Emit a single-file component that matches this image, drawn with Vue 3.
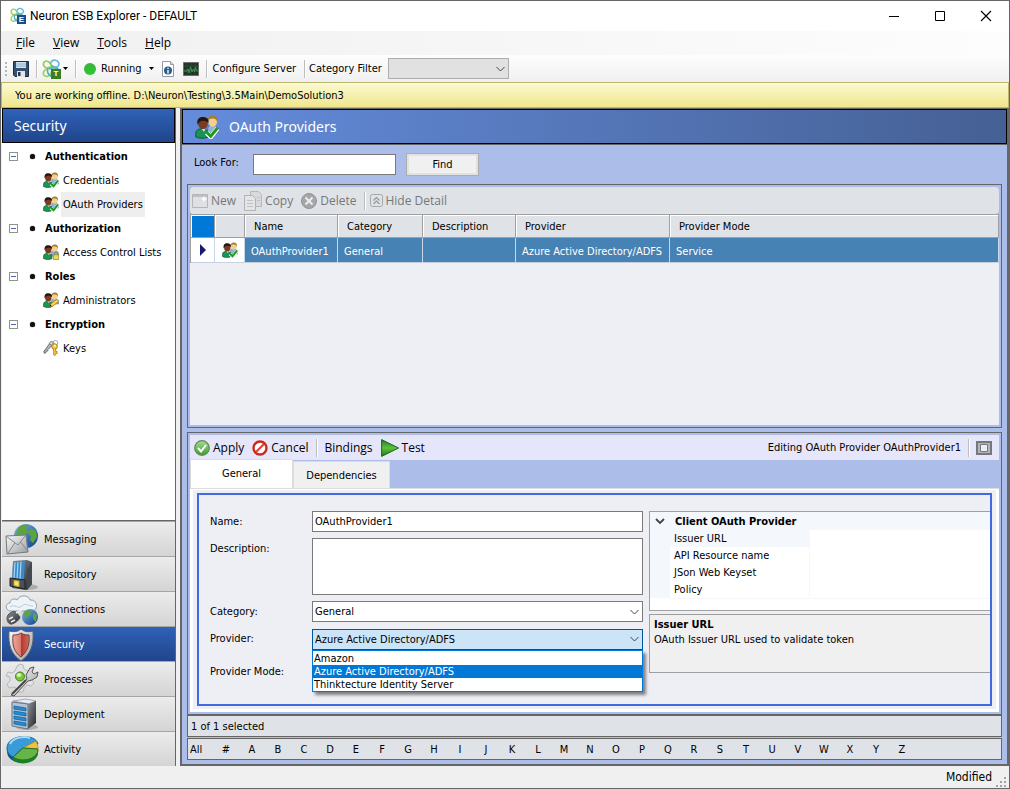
<script setup>
import { ref } from 'vue'

const menus = ['File', 'View', 'Tools', 'Help']

const tree = [
  { name: 'Authentication', children: [{ name: 'Credentials', badge: 'check' }, { name: 'OAuth Providers', badge: 'check', active: true }] },
  { name: 'Authorization', children: [{ name: 'Access Control Lists', badge: 'lock' }] },
  { name: 'Roles', children: [{ name: 'Administrators', badge: 'pencil' }] },
  { name: 'Encryption', children: [{ name: 'Keys', badge: 'keys' }] },
]

const sections = ['Messaging', 'Repository', 'Connections', 'Security', 'Processes', 'Deployment', 'Activity']
const columns = ['Name', 'Category', 'Description', 'Provider', 'Provider Mode']
const row = ['OAuthProvider1', 'General', '', 'Azure Active Directory/ADFS', 'Service']
const providers = ['Amazon', 'Azure Active Directory/ADFS', 'Thinktecture Identity Server']
const properties = ['Issuer URL', 'API Resource name', 'JSon Web Keyset', 'Policy']
const letters = ['#', ...'ABCDEFGHIJKLMNOPQRSTUVWXYZ']

const search = ref('')
const name = ref('OAuthProvider1')
const description = ref('')
const category = ref('General')
const provider = ref('Azure Active Directory/ADFS')
</script>

<template>
  <div class="window">
    <svg class="defs" width="0" height="0" aria-hidden="true">
      <defs>
        <linearGradient id="g-globe" x1="0" y1="0" x2="1" y2="1"><stop offset="0" stop-color="#7db8e8" /><stop offset="1" stop-color="#0b3f8f" /></linearGradient>
        <linearGradient id="g-silver" x1="0" y1="0" x2="1" y2="1"><stop offset="0" stop-color="#fafafa" /><stop offset="1" stop-color="#9a9da0" /></linearGradient>
        <linearGradient id="g-dark" x1="0" y1="0" x2="1" y2="1"><stop offset="0" stop-color="#8a9096" /><stop offset="1" stop-color="#23272b" /></linearGradient>
        <linearGradient id="g-play" x1="0" y1="0" x2="0" y2="1"><stop offset="0" stop-color="#1f7d1d" /><stop offset=".5" stop-color="#5fbf3e" /><stop offset="1" stop-color="#1c7a18" /></linearGradient>
        <linearGradient id="g-shield" x1="0" y1="0" x2="1" y2="0"><stop offset="0" stop-color="#f0a79c" /><stop offset=".5" stop-color="#d9776c" /><stop offset=".51" stop-color="#b3382f" /><stop offset="1" stop-color="#d4695c" /></linearGradient>
        <linearGradient id="g-check" x1="0" y1="0" x2="0" y2="1"><stop offset="0" stop-color="#a9d99a" /><stop offset="1" stop-color="#3d9c2c" /></linearGradient>
        <symbol id="people" viewBox="0 0 16 16">
          <path d="M8.500 12V9c0-1.500 1-2.200 2.500-2.200 2.600 0 4.500 1 4.500 3V12z" fill="#8fb4d6" stroke="#4a6c92" stroke-width=".5" />
          <ellipse cx="11.800" cy="4.300" rx="2.900" ry="3.500" fill="#f3cf92" />
          <path d="M8.600 4.200C8.300 1.700 10 .5 11.800.5c2.200 0 3.600 1.300 3 4.200-.6-1.700-1.500-2.300-3-2.300-1.600 0-2.500.4-3.200 1.800z" fill="#a97c28" />
          <path d="M.5 14.500v-2C.5 10.300 2 9.200 4.500 9.200s4.500 1.100 4.500 3.300v2c-2 1.300-6.500 1.300-8.500 0z" fill="#1a9455" stroke="#075226" stroke-width=".6" />
          <ellipse cx="5.300" cy="5.700" rx="3.200" ry="3.800" fill="#7a3b22" />
          <path d="M1.700 6.500C1 3 2.500 1.300 5.200 1.300s4.300 1.400 3.700 4C7.800 4 6.500 3.600 4.800 3.800 3.200 4 2.600 5 1.700 6.500z" fill="#27150f" />
          <path d="M4.500 9.400l1.400 1.700L7 9.400z" fill="#f1dfcf" />
        </symbol>
        <symbol id="badge-check" viewBox="0 0 16 16"><path d="M7.800 11.800l2.700 2.700 4.500-5.500" fill="none" stroke="#fff" stroke-width="3.200" /><path d="M7.800 11.500l2.700 2.700 4.500-5.500" fill="none" stroke="#1c9a1c" stroke-width="2" /></symbol>
        <symbol id="badge-lock" viewBox="0 0 16 16"><path d="M11.500 11V9.500a1.600 1.600 0 013.200 0V11" fill="none" stroke="#777" stroke-width="1" /><rect x="10.200" y="10.800" width="5.600" height="4.700" fill="#ecd94e" stroke="#9a8420" stroke-width=".7" /></symbol>
        <symbol id="badge-pencil" viewBox="0 0 16 16"><path d="M6.500 15l.8-2.800 6.500-5 2 2.200-6.500 5z" fill="#ffd24b" stroke="#946b0c" stroke-width=".7" /><path d="M6.500 15l.8-2.800 1.500 1.900z" fill="#333" /></symbol>
        <symbol id="badge-keys" viewBox="0 0 16 16">
          <path d="M7 3L.8 11.500l.4 1.700 1.600-.3.400-1.500 1.500-.4.300-1.500L9 5.500" fill="#aeb4b9" stroke="#555b60" stroke-width=".8" />
          <path d="M6 3.500C7 1.500 9 1 10.500 2L9 5.500z" fill="#d7dbdd" stroke="#6c7175" stroke-width=".8" />
          <circle cx="12.500" cy="2.800" r="2.300" fill="none" stroke="#9ea4a8" stroke-width="1" />
          <circle cx="11.500" cy="6.500" r="2.800" fill="#f4c842" stroke="#a0740b" stroke-width=".9" /><circle cx="12" cy="5.700" r=".9" fill="#fff" />
          <path d="M10.600 9v5.800l1.100.9 1-.9v-1.300h1.400v-2h-1.400V9" fill="#f4c842" stroke="#a0740b" stroke-width=".7" />
        </symbol>
        <symbol id="neuron" viewBox="0 0 18 18">
          <g fill="none" stroke-width="1.600">
            <path d="M9 7.500C7 9.500 3 9 1.700 6.500.6 4.300 2.500 1.300 5 2c2.500.6 3.500 3 4.500 5.500" stroke="#8fd14f" />
            <path d="M8 5C8 2.500 10 .8 12.500 1.200c3 .5 4.500 3 3 5.300-1.300 2-4.500 1.500-6.500-.5" stroke="#62b5e5" />
            <path d="M8.500 7.500C5 8 1.500 10.500 1.200 13.500c-.2 2.500 2.500 3.800 5 2.500C8.500 14.700 9.500 11 9 8" stroke="#9ad455" />
            <path d="M5.500 9c-1 3 .5 6.500 3.500 7.500M6.500 9.500C9 8.500 13 7.500 15.500 9.500" stroke="#4ca7d8" />
            <path d="M9 6c3 2 6 4 6.500 7" stroke="#6bc17d" />
          </g>
        </symbol>
      </defs>
    </svg>

    <header class="titlebar">
      <span class="app-icon"><svg width="16" height="18"><use href="#neuron" width="15" height="16" /></svg><b class="tag blue">E</b></span>
      <h1>Neuron ESB Explorer - DEFAULT</h1>
      <button class="caption" aria-label="Minimize"><svg width="12" height="12"><path d="M1 6.500h10" stroke="#000" /></svg></button>
      <button class="caption" aria-label="Maximize"><svg width="12" height="12"><path d="M1.500 1.500h9v9h-9z" fill="none" stroke="#000" /></svg></button>
      <button class="caption" aria-label="Close"><svg width="12" height="12"><path d="M1 1l10 10M11 1L1 11" stroke="#000" stroke-width="1.100" /></svg></button>
    </header>

    <nav class="menubar">
      <button v-for="m in menus" :key="m"><u>{{ m[0] }}</u>{{ m.slice(1) }}</button>
    </nav>

    <div class="toolbar">
      <i class="grip"></i>
      <button class="tool-save" aria-label="Save"><svg width="16" height="16"><path d="M.5.5h15v15H2l-1.500-1.500z" fill="#34516e" stroke="#182e47" /><path d="M3 1h10v6H3z" fill="#cfe2f3" /><path d="M3 3h10M3 5h10" stroke="#8fb0cf" /><path d="M4 10h8v6H4z" fill="#e5e5e5" /><path d="M5 11h2.500v4H5z" fill="#24384f" /></svg></button>
      <i class="sep"></i>
      <button class="tool-neuron" aria-label="Neuron tools"><svg width="20" height="20"><use href="#neuron" width="19" height="19" /></svg><b class="tag green">T</b><svg class="caret" width="5" height="3"><path d="M0 0h5L2.500 3z" /></svg></button>
      <i class="sep"></i>
      <button class="tool-run"><i class="led"></i>Running<svg class="caret" width="5" height="3"><path d="M0 0h5L2.500 3z" /></svg></button>
      <button class="tool-doc" aria-label="Information"><svg width="12" height="16"><path d="M.5.5h8l3 3v12H.5z" fill="#fff" stroke="#949ba3" /><path d="M8.500.5v3h3" fill="#ddd" stroke="#949ba3" /><circle cx="6" cy="9.500" r="4" fill="#25618f" /><path d="M6 9v3.500M6 6.800v1.200" stroke="#fff" stroke-width="1.400" /></svg></button>
      <button class="tool-monitor" aria-label="Monitor"><svg width="16" height="14"><path d="M.5.5h15v13H.5z" fill="#26302a" stroke="#697069" /><path d="M1 4h14M1 8h14M4 1v12M8 1v12M12 1v12" stroke="#355840" stroke-width=".6" /><path d="M1 9h3l1-2 1 4 1.500-6L9 10l1.500-3 1 3 1-5 1 4h2" fill="none" stroke="#2fa84a" stroke-width=".9" /></svg></button>
      <i class="sep"></i>
      <button class="tool-config">Configure Server</button>
      <i class="sep"></i>
      <label for="filter">Category Filter</label>
      <span class="combo filter"><select id="filter" disabled><option></option></select><svg width="9" height="6"><path d="M.5 1l4 4 4-4" /></svg></span>
    </div>

    <div class="notice">You are working offline. D:\Neuron\Testing\3.5Main\DemoSolution3</div>

    <main class="body">
      <aside class="sidebar">
        <h2 class="side-title">Security</h2>
        <ul class="tree">
          <li v-for="group in tree" :key="group.name">
            <div class="node"><button class="toggle" :aria-label="'Collapse ' + group.name"></button><i class="dot"></i><strong>{{ group.name }}</strong></div>
            <ul>
              <li v-for="child in group.children" :key="child.name" class="leaf">
                <svg width="16" height="16"><use v-if="child.badge !== 'keys'" href="#people" width="16" height="16" /><use :href="'#badge-' + child.badge" width="16" height="16" /></svg>
                <a href="#" :class="{ active: child.active }">{{ child.name }}</a>
              </li>
            </ul>
          </li>
        </ul>
        <nav class="sections">
          <button v-for="s in sections" :key="s" :class="{ current: s === 'Security' }">
            <svg width="34" height="34" viewBox="0 0 34 34">
              <g v-if="s === 'Messaging'"><circle cx="21" cy="13" r="12" fill="url(#g-globe)" /><path d="M14 4c4-3 7-3 9-2l-2 4 3 2-4 4-4-1-3 3-2-4zM26 5l5 3 1 6-4 6-3-3 1-4-3-3z" fill="#5da53a" /><path d="M1 13l20-1 2 17-21 2z" fill="url(#g-silver)" stroke="#75797d" /><path d="M1.500 13.500L13 22l8-10M3 30l7-10M23 28l-7.500-9" fill="none" stroke="#85898d" /></g>
              <g v-else-if="s === 'Repository'"><ellipse cx="22" cy="29" rx="11" ry="3" fill="#0003" /><path d="M8 3l14-1 5 2v22l-5 6-15-2z" fill="url(#g-dark)" /><path d="M8 5l12-2-1 18-12 1z" fill="#3b8bc9" /><path d="M10 4.500L9 21M13 4l-1 17M16 3.500L15 21" stroke="#a8d4f3" stroke-width="1.200" /><path d="M5 20l15 2v9L5 28z" fill="#4b5055" stroke="#222" /><path d="M9 22.500l5 .6v5.500l-5-1z" fill="#f3e37a" stroke="#c3a42c" /><path d="M22 12l5-8v22l-5 6z" fill="#43484e" /></g>
              <g v-else-if="s === 'Connections'"><path d="M5 18c-5-1-5-8 0-8 0-4 5-5 7-3 3-6 12-5 13 0 7-1 9 9 3 11z" fill="#eef3f8" stroke="#8fa1b3" /><path d="M5 14c5-4 8 3 12-1s7 1 11 0" stroke="#bccbdb" fill="none" /><circle cx="25" cy="24" r="8" fill="url(#g-globe)" /><path d="M20 18l5-1 1 4-4 3-4-1zM28 19l4 3-1 7-3-3z" fill="#5da53a" /><path d="M2 25c0-4 6-8 9-6l4 5c0 3-7 8-10 7-2-1-3-3-3-6z" fill="url(#g-dark)" stroke="#555" /><path d="M4 26l4-2M6 29l4-2M11 20l6-3" stroke="#eee" stroke-width="1.500" /></g>
              <g v-else-if="s === 'Security'"><path d="M16 1c3 3 8 3 12 2 1 14-2 23-12 30C6 26 3 17 4 3c4 1 9 1 12-2z" fill="url(#g-silver)" stroke="#5a5d62" /><path d="M16 5c3 2 5 2 8 2 1 10-2 17-8 22C9 24 7 17 8 7c3 0 5 0 8-2z" fill="url(#g-shield)" stroke="#72423f" /></g>
              <g v-else-if="s === 'Processes'"><path d="M12 3l3-2 3 1 1 4 3 2 4-1 2 4-2 3 1 3 2 3-3 3-4-1-3 3-1 4h-5l-2-4-3-1-4 1-2-4 3-3v-4L1 13l2-4 4 1 3-2z" fill="#e0e2e3" stroke="#b5b8ba" /><circle cx="15" cy="13.500" r="4.500" fill="#79c735" stroke="#42811e" /><ellipse cx="14" cy="12" rx="2.500" ry="2" fill="#d4f1b1" /><path d="M6 32l16-16-1-4 4-7 4-1-2 5 2 2 4-2-1 5-5 3-4 1L9 33z" fill="url(#g-silver)" stroke="#555" /><path d="M7 31l14-14" stroke="#444" stroke-width="2" /></g>
              <g v-else-if="s === 'Deployment'"><ellipse cx="22" cy="29" rx="11" ry="3" fill="#0003" /><path d="M8 3l13-2 10 2-7 3z" fill="#e6ebf1" stroke="#70808f" stroke-width=".6" /><path d="M7 4l16 2v25L7 28z" fill="#b6c3d2" stroke="#637585" /><path d="M23 6l8-3v22l-8 6z" fill="url(#g-dark)" /><path d="M9 8l12 2v3L9 11zM9 13l12 2v3L9 16zM9 18l12 2v3L9 21zM9 23l12 2v3L9 26z" fill="#278dd2" stroke="#0a5a98" stroke-width=".7" /></g>
              <g v-else><path d="M2 15v4c1 14 27 14 31 1v-5z" fill="#145187" /><path d="M2 15C2 1 31 0 33 11L18 15 8 24c-4-2-6-5-6-9z" fill="#399bd8" stroke="#1a6399" /><path d="M18 15l13-7 2 5v3z" fill="#f4c13b" stroke="#ae7a0c" stroke-width=".6" /><path d="M18 15l15 1c1 9-15 15-25 8z" fill="#67b546" stroke="#237122" /><path d="M8 24c8 6 24 2 25-7v4c-2 10-19 12-25 6z" fill="#1b7f27" /><path d="M5 11C8 4 20 3 25 5" stroke="#a9dbf8" stroke-width="2" fill="none" /></g>
            </svg>
            {{ s }}
          </button>
        </nav>
      </aside>

      <section class="workspace">
        <h2 class="page-title"><svg width="26" height="24"><use href="#people" width="24" height="24" /><use href="#badge-check" width="24" height="24" /></svg>OAuth Providers</h2>

        <div class="content">
          <form class="search" @submit.prevent>
            <label for="look">Look For:</label>
            <input id="look" v-model="search" type="text">
            <button>Find</button>
          </form>

          <section class="panel list">
            <div class="list-tools">
              <button disabled><svg width="16" height="14"><path d="M.5.5h15v13H.5z" fill="#dfe0e2" stroke="#b3b5b8" /><path d="M1 1h14v2H1z" fill="#bdbfc2" /><path d="M12 2l1 2 2 1-2 1-1 2-1-2-2-1 2-1z" fill="#fff" /></svg>New</button>
              <button disabled><svg width="18" height="20"><path d="M6.500.5h8l3 3v12h-11z" fill="#d7d9dc" stroke="#b6b8bb" /><path d="M.5 4.500h8l3 3v12H.5z" fill="#e4e5e7" stroke="#b0b2b5" /><path d="M3 9.500h6M3 12.500h6M3 15.500h6M13 6.500h3M13 9.500h3" stroke="#bfc1c3" /></svg>Copy</button>
              <button disabled><svg width="16" height="16"><circle cx="8" cy="8" r="7.500" fill="#a5a6a8" stroke="#929396" /><path d="M4.500 4.500l7 7M11.500 4.500l-7 7" stroke="#eceded" stroke-width="2" /></svg>Delete</button>
              <i class="sep"></i>
              <button disabled><svg width="14" height="14"><rect x=".5" y=".5" width="12" height="12" rx="2" fill="none" stroke="#a5a6a8" /><path d="M3.500 6.500l3-3 3 3M3.500 10l3-3 3 3" fill="none" stroke="#96979a" stroke-width="1.200" /></svg>Hide Detail</button>
            </div>
            <table>
              <colgroup><col class="c-mark"><col class="c-icon"><col class="c-name"><col class="c-cat"><col class="c-desc"><col class="c-prov"><col></colgroup>
              <thead><tr><th class="corner"></th><th></th><th v-for="c in columns" :key="c">{{ c }}</th></tr></thead>
              <tbody><tr>
                <td class="plain"><svg width="6" height="12"><path d="M0 0l6 6-6 6z" fill="#191970" /></svg></td>
                <td class="plain"><svg width="16" height="16"><use href="#people" width="16" height="16" /><use href="#badge-check" width="16" height="16" /></svg></td>
                <td v-for="(v, i) in row" :key="i">{{ v }}</td>
              </tr></tbody>
            </table>
          </section>

          <section class="panel detail">
            <div class="detail-tools">
              <button><svg width="16" height="16"><circle cx="8" cy="8" r="7.300" fill="url(#g-check)" stroke="#5d8b55" stroke-width="1.200" /><path d="M4 8l3 3.500L12 5" fill="none" stroke="#fff" stroke-width="2" /></svg>Apply</button>
              <button><svg width="16" height="16"><circle cx="8" cy="8" r="6.500" fill="#fff" stroke="#c92a1b" stroke-width="2.400" /><path d="M4 12l8-8" stroke="#d94333" stroke-width="2.200" /></svg>Cancel</button>
              <i class="sep"></i>
              <button>Bindings</button>
              <button class="test"><svg width="18" height="18"><path d="M.6.6l17 8.400-17 8.400z" fill="url(#g-play)" stroke="#176b16" /></svg>Test</button>
              <span class="editing">Editing OAuth Provider OAuthProvider1</span>
              <i class="sep"></i>
              <button aria-label="Maximize detail"><svg width="16" height="14"><path d="M1 1h14v12H1z" fill="#b4b4bc" stroke="#777780" stroke-width="2" /><path d="M4.500 3.500h7v7h-7z" fill="#eeeef5" stroke="#77777f" /></svg></button>
            </div>
            <div class="tabs" role="tablist">
              <button role="tab" aria-selected="true">General</button>
              <button role="tab" aria-selected="false">Dependencies</button>
            </div>
            <div class="page">
              <div class="frame">
                <form class="fields" @submit.prevent>
                  <label for="name">Name:</label>
                  <input id="name" v-model="name" type="text">
                  <label for="desc">Description:</label>
                  <textarea id="desc" v-model="description"></textarea>
                  <label for="cat">Category:</label>
                  <span class="combo"><select id="cat" v-model="category"><option>General</option></select><svg width="9" height="6"><path d="M.5 1l4 4 4-4" /></svg></span>
                  <label for="prov">Provider:</label>
                  <span class="combo open">
                    <select id="prov" v-model="provider"><option v-for="p in providers" :key="p">{{ p }}</option></select><svg width="9" height="6"><path d="M.5 1l4 4 4-4" /></svg>
                    <ul class="options" role="listbox" aria-label="Provider"><li v-for="p in providers" :key="p" role="option" :aria-selected="p === provider" @click="provider = p">{{ p }}</li></ul>
                  </span>
                  <span class="mode">Provider Mode:</span>
                </form>
                <div class="props">
                  <div class="prop-grid">
                    <h3><svg width="10" height="7"><path d="M1 1l4 4 4-4" fill="none" stroke="#444" stroke-width="1.800" /></svg>Client OAuth Provider</h3>
                    <dl><div v-for="(p, i) in properties" :key="p" :class="{ picked: i === 0 }"><dt>{{ p }}</dt><dd></dd></div></dl>
                  </div>
                  <div class="help"><h3>Issuer URL</h3><p>OAuth Issuer URL used to validate token</p></div>
                </div>
              </div>
            </div>
          </section>

          <div class="strip">1 of 1 selected</div>
          <nav class="strip alphabet"><button class="all">All</button><button v-for="l in letters" :key="l">{{ l }}</button></nav>
        </div>
      </section>
    </main>

    <footer class="statusbar"><span>Modified</span><svg width="11" height="11"><path d="M8 0h2v2H8zM4 4h2v2H4zM8 4h2v2H8zM0 8h2v2H0zM4 8h2v2H4zM8 8h2v2H8z" fill="#a3a3a3" /></svg></footer>
  </div>
</template>

<style>
body { margin: 0; background: #f0f0f0; }
</style>

<style scoped>
* { box-sizing: border-box; }
.window { position: relative; display: flex; flex-direction: column; min-height: 100vh; border: 1px solid #666; background: #f0f0f0; font: 11px/14px "DejaVu Sans Condensed", "Noto Sans", sans-serif; color: #000; }
.defs { position: absolute; }
svg { flex: none; }
button, input, textarea, select { font: inherit; color: inherit; margin: 0; border-radius: 0; }
button { padding: 0; border: 0; background: none; }
h1, h2, h3, p, ul, dl, dd { margin: 0; padding: 0; }
ul { list-style: none; }
.sep { flex: none; width: 2px; height: 18px; background: #bdbdbd; border-right: 1px solid #fff; }
.caret { fill: #000; }

.titlebar { display: flex; align-items: center; height: 30px; padding-left: 9px; background: #fff; }
.titlebar h1 { flex: 1; font: 12px/16px Roboto, sans-serif; }
.app-icon { position: relative; width: 20px; height: 18px; }
.tag { position: absolute; display: grid; place-items: center; color: #fff; font: bold 8px/9px "Liberation Sans", sans-serif; }
.tag.blue { left: 7px; top: 8px; width: 9px; height: 9px; background: #14508c; }
.tag.green { left: 9px; top: 10px; width: 10px; height: 10px; background: #3b7d23; }
.caption { display: grid; place-items: center; width: 46px; height: 28px; }

.menubar { display: flex; gap: 18px; height: 24px; padding-left: 15px; background: linear-gradient(90deg, #f0f0f0, #fdfdfd); font: 12px/24px "Open Sans", sans-serif; }
.toolbar { display: flex; align-items: center; height: 27px; padding-left: 4px; background: linear-gradient(#fdfdfd, #f0f0f0); line-height: 16px; }
.toolbar > button { display: flex; align-items: center; }
.grip { width: 2px; height: 14px; background: repeating-linear-gradient(#b5b5b5 0 2px, transparent 2px 4px); }
.tool-save { margin: 0 7px 0 6px; }
.tool-neuron { position: relative; gap: 1px; margin: 0 7px 0 4px; }
.tool-run { margin: 0 8px 0 7px; }
.tool-run .caret { margin-left: 7px; }
.led { width: 12px; height: 12px; margin-right: 5px; border-radius: 6px; background: linear-gradient(#3fae3f, #28cc30); }
.tool-monitor { margin: 0 7px 0 9px; }
.tool-config { margin: 0 8px 0 5px; }
.toolbar label { margin: 0 6px 0 3px; }
.notice { height: 26px; padding: 0 13px; border: 1px solid #bdb76b; background: linear-gradient(#fbfad2, #f0e68c); line-height: 25px; }

.combo { position: relative; display: block; }
.combo select { display: block; width: 100%; height: 21px; padding: 0 20px 0 2px; appearance: none; border: 1px solid #7a7a7a; background: #fff; line-height: 17px; opacity: 1; }
.combo > svg { position: absolute; right: 4px; top: 8px; pointer-events: none; }
.combo path { fill: none; stroke: #444; }
.combo.filter { width: 121px; }
.combo.filter select { border-color: #adadad; background: #e1e1e1; }
.combo.open select { border-color: #005499; background: #cce4f7; }

.body { flex: 1; display: flex; padding-left: 1px; gap: 4px; background: #f0f0f0; }
.sidebar { display: flex; flex-direction: column; flex: 0 0 174px; border-right: 1px solid #666; background: #fff; }
.side-title { height: 35px; padding-left: 11px; border: 1px solid #000; background: linear-gradient(#2f62b8, #20458b); color: #fff; font: 14px/33px "Noto Sans", sans-serif; }
.tree { flex: 1; padding-top: 1px; }
.node, .leaf { display: flex; align-items: center; height: 24px; }
.toggle { position: relative; width: 9px; height: 9px; margin: 0 12px 0 7px; border: 1px solid #919191; }
.toggle::after { content: ""; display: block; height: 1px; margin: 0 1px; background: #4b63a7; }
.dot { width: 5px; height: 5px; margin-right: 10px; border-radius: 3px; background: #111; box-shadow: 0 0 1px #000; }
.node strong { padding-top: 1px; }
.leaf { padding-left: 41px; }
.leaf a { margin-left: 2px; padding: 0 2px; color: inherit; text-decoration: none; line-height: 25px; white-space: nowrap; }
.leaf .active { background: #eee; }
.sections { border-top: 1px solid #666; }
.sections button { display: flex; align-items: center; gap: 5px; width: 100%; height: 35px; padding: 2px 0 0 3px; border-top: 1px solid #a6a6a6; background: linear-gradient(#ececec, #d4d4d4); text-align: left; }
.sections .current { background: linear-gradient(#2f62b8, #20458b); color: #fff; }

.workspace { flex: 1; display: flex; flex-direction: column; min-width: 0; border: solid #666; border-width: 1px 2px 2px; }
.page-title { display: flex; align-items: center; gap: 8px; height: 35px; padding-left: 12px; border: 1px solid #000; background: linear-gradient(90deg, #648cdc, #456094); color: #fff; font: 14px/33px "Noto Sans", sans-serif; }
.content { flex: 1; display: flex; flex-direction: column; padding: 0 5px 4px; border-top: 1px solid #666; background: #abbde8; }
.search { display: flex; align-items: center; height: 39px; padding-left: 7px; }
.search label { width: 59px; padding-bottom: 4px; }
.search input { width: 143px; height: 21px; border: 1px solid #7a7a7a; background: #fff; }
.search button { width: 73px; height: 23px; margin-left: 10px; border: 1px solid #adadad; background: #f0f0f0; box-shadow: inset 0 0 0 2px #e1e1e1; }
.panel { border: 1px solid #666; padding: 2px; }
.list { flex: 1; display: flex; flex-direction: column; min-height: 240px; }
.list-tools { display: flex; align-items: center; height: 27px; padding-left: 2px; border-radius: 4px; background: #dfe3e8; color: #777; font: 12px/18px "Open Sans", sans-serif; }
.list-tools button { display: flex; align-items: center; gap: 3px; margin-right: 8px; }
.list-tools .sep { margin-right: 4px; }
.list-tools .sep + button { gap: 1px; }
.list::after { content: ""; flex: 1; background: #eeeff5; }
table { width: 100%; table-layout: fixed; border-collapse: separate; border-spacing: 0; border-left: 1px solid #a0a0a0; }
.c-mark { width: 24px; } .c-icon { width: 30px; } .c-name { width: 93px; } .c-cat { width: 85px; } .c-desc { width: 93px; } .c-prov { width: 154px; }
th { height: 24px; padding: 2px 0 0 9px; border: solid #a0a0a0; border-width: 1px 1px 1px 0; background: #dfe3e8; box-shadow: inset 1px 1px #fff; font-weight: normal; text-align: left; }
th.corner { background: #0078d7; }
td { height: 25px; padding: 3px 0 0 6px; border-right: 1px solid #c8d6ea; border-bottom: 1px solid #c8d0e0; background: #4682b4; color: #fff; white-space: nowrap; }
td.plain { padding: 0; background: #fff; text-align: center; }
td svg { display: block; margin: 0 auto; }

.detail { margin-top: 4px; }
.detail-tools { display: flex; align-items: center; height: 25px; padding: 0 7px 0 4px; background: #e6e6fa; font: 12px/18px "Open Sans", sans-serif; }
.detail-tools button { display: flex; align-items: center; gap: 3px; margin-right: 8px; }
.detail-tools .sep { margin-right: 6px; }
.detail-tools button:last-child { margin-right: 0; }
.editing { margin: 0 7px 0 auto; font: 11px/18px "DejaVu Sans Condensed", "Noto Sans", sans-serif; }
.tabs { display: flex; align-items: flex-end; height: 29px; border-bottom: 1px solid #dcdcdc; }
.tabs button { width: 97px; height: 27px; padding-top: 2px; border: 1px solid #dcdcdc; border-bottom: 0; background: #f0f0f0; }
.tabs [aria-selected="true"] { width: 103px; height: 29px; padding: 0; background: #fff; }
.page { padding: 3px 4px; border: 1px solid #fff; border-width: 1px 3px 3px; background: #eeeff5; }
.frame { display: grid; grid-template-columns: minmax(0, 1fr) 341px; gap: 6px; border: 2px solid #4169e1; padding: 16px 0 27px 11px; }
.fields { display: grid; grid-template-columns: 102px minmax(0, 1fr); grid-template-rows: 21px 57px 21px 22px 21px; row-gap: 6px; align-content: start; align-items: start; }
.fields label { padding-top: 4px; }
.mode { padding-top: 9px; }
.fields input, textarea { width: 100%; height: 100%; padding: 0 2px; border: 1px solid #7a7a7a; background: #fff; resize: none; }
.fields .open { padding-top: 1px; }
.options { position: absolute; z-index: 2; left: 0; right: 0; top: 22px; padding-top: 1px; border: 1px solid #0078d7; background: #fff; box-shadow: 3px 3px 3px #0007; line-height: 13px; }
.options li { padding-left: 1px; }
.options [aria-selected="true"] { background: #0078d7; color: #fff; }
.props { display: flex; flex-direction: column; gap: 3px; }
.prop-grid { height: 100px; border: 1px solid #a0a0a0; border-right: 0; background: #fff; }
h3 { font: bold 11px/17px "DejaVu Sans Condensed", "Noto Sans", sans-serif; }
.prop-grid h3 { display: flex; align-items: center; gap: 10px; height: 18px; padding-left: 5px; background: #f4f7fc; }
dl div { display: grid; grid-template-columns: 140px 1fr; height: 17px; padding-left: 20px; background: #f4f7fc; }
dt { margin-right: 1px; padding-left: 4px; border-bottom: 1px solid #f4f7fc; background: #fff; line-height: 17px; }
.picked dt { background: #f4f7fc; }
dd { border-bottom: 1px solid #f4f7fc; background: #fff; }
.help { height: 59px; padding: 1px 4px; border: 1px solid #a0a0a0; border-right: 0; background: #f0f0f0; }
.strip { height: 22px; padding-left: 3px; border: 1px solid #666; background: #dfe3e8; line-height: 22px; }
.strip.alphabet { display: flex; margin-top: 1px; padding: 0; }
.alphabet button { width: 26px; }
.alphabet .all { width: 25px; padding-left: 2px; text-align: left; }
.statusbar { display: flex; align-items: center; justify-content: flex-end; gap: 4px; height: 22px; padding-right: 2px; font: 12px/24px "DejaVu Sans Condensed", "Noto Sans", sans-serif; }
.statusbar svg { align-self: flex-end; }
</style>
